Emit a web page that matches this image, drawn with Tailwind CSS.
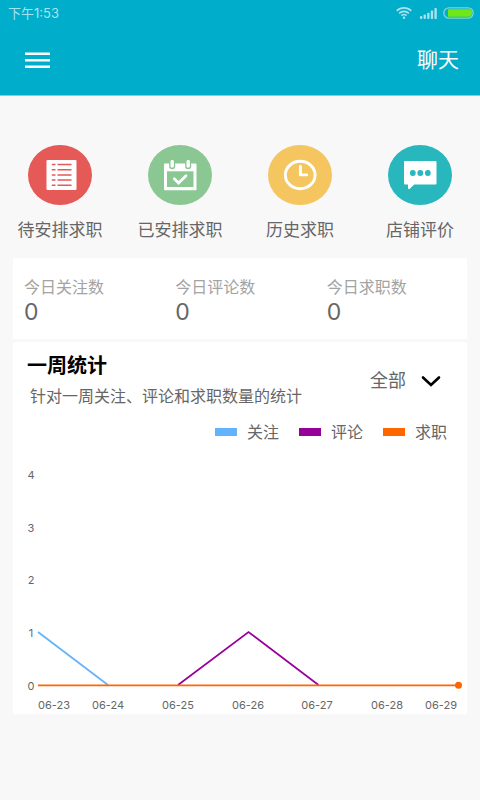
<!DOCTYPE html>
<html lang="zh-CN">
<head>
<meta charset="utf-8">
<meta name="viewport" content="width=device-width, initial-scale=1">
<title>一周统计</title>
<script src="https://cdn.jsdelivr.net/npm/@tailwindcss/browser@4"></script>
</head>
<body class="min-h-screen bg-[#f8f8f8] font-['Inter','Noto_Sans_CJK_SC',sans-serif] text-[#666]">
<header class="border-b border-[#7fd0df] bg-[#00adca] text-white">
  <div class="flex h-[25px] items-center justify-between pl-2 pr-[6px] text-[#a6e3ee]">
    <span class="text-[13px] leading-6">下午1:53</span>
    <div class="flex items-center gap-2">
      <svg class="h-3 w-4" viewBox="0 0 16 12" fill="none" stroke="currentColor" stroke-width="1.6" aria-hidden="true">
        <path d="M.7 3.9C4.8-.1 11.2-.1 15.300 3.900M3.100 6.400c2.800-2.700 7-2.700 9.800 0M5.400 8.700c1.500-1.400 3.700-1.400 5.200 0"/>
        <circle cx="8" cy="10.700" r="1.200" fill="currentColor" stroke="none"/>
      </svg>
      <svg class="h-3 w-[17px]" viewBox="0 0 17 12" fill="currentColor" aria-hidden="true">
        <rect y="9" width="2.300" height="3" rx=".8"/><rect x="3.600" y="7.500" width="2.300" height="4.500" rx=".8"/><rect x="7.200" y="5.700" width="2.300" height="6.300" rx=".8"/><rect x="10.800" y="3.500" width="2.300" height="8.500" rx=".8"/><rect x="14.400" y="1" width="2.400" height="11" rx=".8"/>
      </svg>
      <svg class="-ml-[2px] h-3 w-[31px]" viewBox="0 0 31 12" aria-hidden="true">
        <rect x=".8" y=".8" width="29.400" height="10.400" rx="5.200" fill="none" stroke="#80d6c8" stroke-width="1.300"/>
        <path d="M5 2.300h20.500a3.700 3.700 0 0 1 0 7.400H5z" fill="#6fe81a"/>
      </svg>
    </div>
  </div>
  <div class="flex h-[70px] items-center justify-between pl-[25px] pr-[21px]">
    <button type="button" aria-label="菜单">
      <svg class="h-[17px] w-[25px]" viewBox="0 0 25 17" fill="currentColor" aria-hidden="true"><path d="M0 .5h25v2.500H0zM0 7h25v2.500H0zM0 13.500h25V16H0z"/></svg>
    </button>
    <a href="#" class="text-[21px] leading-8">聊天</a>
  </div>
</header>

<main>
  <nav class="grid grid-cols-4 pt-[49px] text-[17px] leading-6">
    <a href="#" class="flex flex-col items-center gap-[13px]">
      <svg class="h-[60px] w-16" viewBox="0 0 64 60" aria-hidden="true">
        <ellipse cx="32" cy="30" rx="32" ry="30" fill="#e55956"/>
        <rect x="18.500" y="15" width="30" height="30" rx="1" fill="#fff"/>
        <path d="M23.800 19.500h3.700m2 0h14M23.800 24.700h3.700m2 0h14M23.800 29.900h3.700m2 0h14M23.800 35.100h3.700m2 0h14M23.800 40.300h3.700m2 0h14" stroke="#e55956" stroke-width="1.500"/>
      </svg>
      <span>待安排求职</span>
    </a>
    <a href="#" class="flex flex-col items-center gap-[13px]">
      <svg class="h-[60px] w-16" viewBox="0 0 64 60" aria-hidden="true">
        <ellipse cx="32" cy="30" rx="32" ry="30" fill="#8ac792"/>
        <rect x="16" y="18.500" width="32.500" height="26.800" rx="1" fill="#fff"/>
        <path d="M19 26.300h26.500v15.700H19z" fill="#8ac792"/>
        <rect x="21.200" y="13.300" width="6" height="11" rx="3" fill="#8ac792"/><rect x="37.200" y="13.300" width="6" height="11" rx="3" fill="#8ac792"/>
        <rect x="22.500" y="14.800" width="3.400" height="8" rx="1.700" fill="#fff"/><rect x="38.500" y="14.800" width="3.400" height="8" rx="1.700" fill="#fff"/>
        <path d="m26.300 33.700 4.300 4.300 7.400-7.200" fill="none" stroke="#fff" stroke-width="2.700" stroke-linecap="round"/>
      </svg>
      <span>已安排求职</span>
    </a>
    <a href="#" class="flex flex-col items-center gap-[13px]">
      <svg class="h-[60px] w-16" viewBox="0 0 64 60" fill="none" aria-hidden="true">
        <ellipse cx="32" cy="30" rx="32" ry="30" fill="#f5c55f"/>
        <ellipse cx="32.200" cy="30" rx="14.900" ry="13.700" stroke="#fff" stroke-width="2.900"/>
        <path d="M32.400 21.500v8.400h6.300" stroke="#fff" stroke-width="2.900" stroke-linecap="round" stroke-linejoin="round"/>
      </svg>
      <span>历史求职</span>
    </a>
    <a href="#" class="flex flex-col items-center gap-[13px]">
      <svg class="h-[60px] w-16" viewBox="0 0 64 60" aria-hidden="true">
        <ellipse cx="32" cy="30" rx="32" ry="30" fill="#27b7bd"/>
        <path d="M17 16h30.500a1 1 0 0 1 1 1v21.600a1 1 0 0 1-1 1H26.300l-4.500 4.200c-.8.700-1.800.3-1.800-.8v-3.400h-3a1 1 0 0 1-1-1V17a1 1 0 0 1 1-1z" fill="#fff"/>
        <g fill="#27b7bd"><circle cx="24.800" cy="28" r="2.900"/><circle cx="32.300" cy="28" r="2.900"/><circle cx="39.800" cy="28" r="2.900"/></g>
      </svg>
      <span>店铺评价</span>
    </a>
  </nav>

  <div class="mx-[13px] mt-4 flex flex-col gap-[3px]">
    <dl class="grid grid-cols-3 bg-white pb-[13px] pt-[17px]">
      <div class="pl-[11px]"><dt class="text-base leading-6 text-[#a3a3a3]">今日关注数</dt><dd class="text-[23px] leading-[27px]">0</dd></div>
      <div class="pl-[11px]"><dt class="text-base leading-6 text-[#a3a3a3]">今日评论数</dt><dd class="text-[23px] leading-[27px]">0</dd></div>
      <div class="pl-[11px]"><dt class="text-base leading-6 text-[#a3a3a3]">今日求职数</dt><dd class="text-[23px] leading-[27px]">0</dd></div>
    </dl>

    <section class="bg-white pt-3">
      <div class="flex items-center justify-between pl-[14px] pr-[26px]">
        <div class="flex flex-col gap-[6px]">
          <h1 class="text-[20px] font-bold leading-6 text-black">一周统计</h1>
          <p class="pl-[3px] text-base leading-6">针对一周关注、评论和求职数量的统计</p>
        </div>
        <label class="relative flex items-center">
          <select aria-label="统计类型" class="w-[71px] appearance-none bg-transparent text-[18px] leading-6">
            <option>全部</option><option>关注</option><option>评论</option><option>求职</option>
          </select>
          <svg class="pointer-events-none absolute right-0 h-3 w-5" viewBox="0 0 20 12" fill="none" stroke="#000" stroke-width="2.600" stroke-linecap="round" aria-hidden="true"><path d="m2 2.500 8 7.500 8-7.500"/></svg>
        </label>
      </div>
      <ul class="mt-3 flex justify-end gap-5 pr-5 text-base leading-6">
        <li class="flex items-center gap-[10px]"><i class="h-2 w-[22px] bg-[#62b3fb]"></i>关注</li>
        <li class="flex items-center gap-[10px]"><i class="h-2 w-[22px] bg-[#970099]"></i>评论</li>
        <li class="flex items-center gap-[10px]"><i class="h-2 w-[22px] bg-[#ff6600]"></i>求职</li>
      </ul>
      <svg class="block w-full" viewBox="0 0 454 270" role="img" aria-label="一周关注、评论和求职数量">
        <g font-size="11" fill="#666">
          <g text-anchor="middle">
            <text x="18" y="35">4</text><text x="18" y="88">3</text><text x="18" y="140">2</text><text x="18" y="193">1</text><text x="18" y="246">0</text>
            <text x="95" y="265">06-24</text><text x="165" y="265">06-25</text><text x="235" y="265">06-26</text><text x="304" y="265">06-27</text><text x="374" y="265">06-28</text>
          </g>
          <text x="25" y="265">06-23</text>
          <text x="444" y="265" text-anchor="end">06-29</text>
        </g>
        <g fill="none" stroke-width="1.700">
          <path d="m25 188 70 53" stroke="#62b3fb"/>
          <path d="m165 241 70.500-53 70 53" stroke="#970099"/>
          <path d="M25 241.300h420" stroke="#ff6600"/>
        </g>
        <circle cx="445.500" cy="241.300" r="3.500" fill="#ff6600"/>
      </svg>
    </section>
  </div>
</main>
</body>
</html>
